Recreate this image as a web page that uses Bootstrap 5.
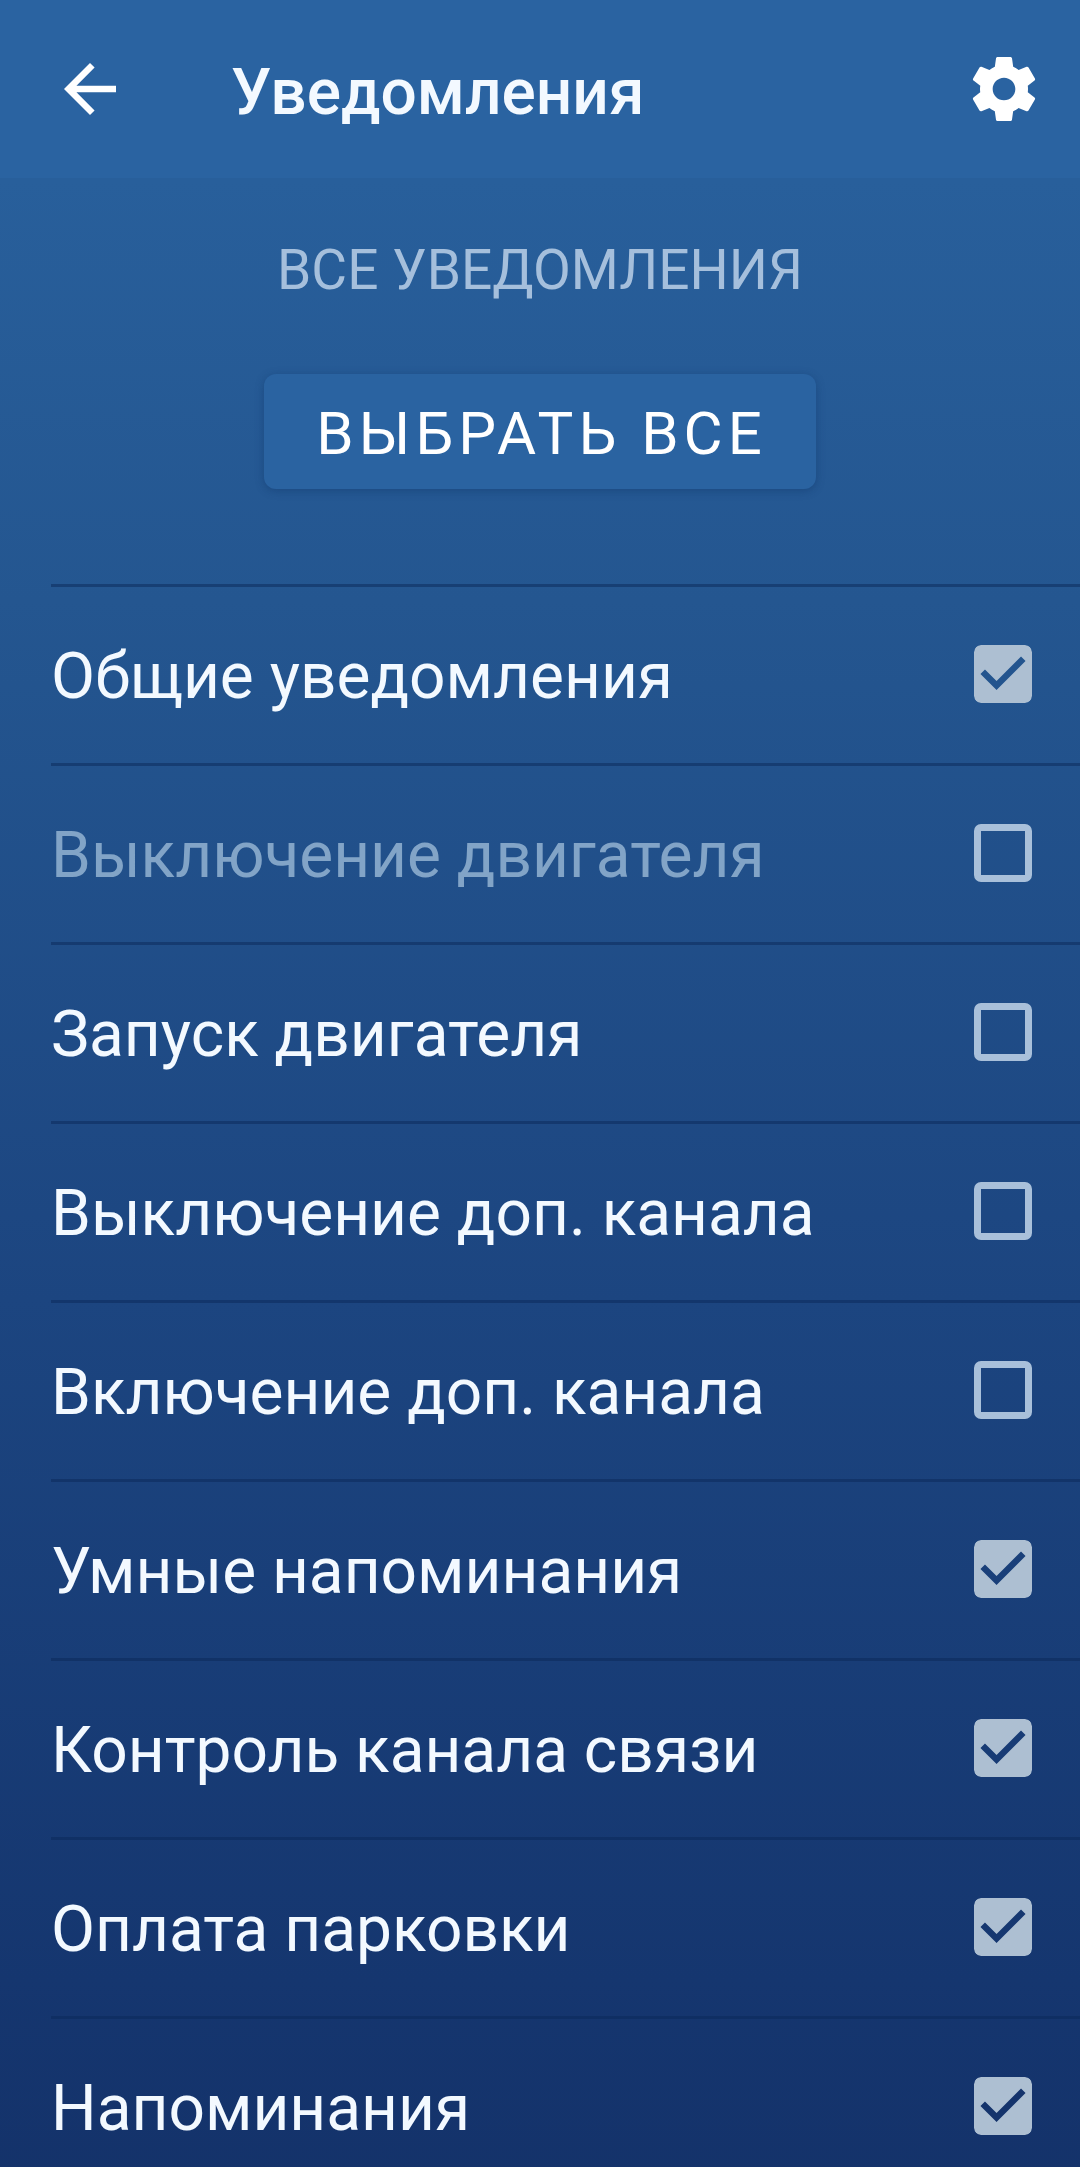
<!DOCTYPE html>
<html lang="ru">
<head>
<meta charset="utf-8">
<meta name="viewport" content="width=device-width, initial-scale=1">
<title>Уведомления</title>
<link href="https://cdn.jsdelivr.net/npm/bootstrap@5.3.0/dist/css/bootstrap.min.css" rel="stylesheet">
<style>
  body {
    font-family: Roboto, "Liberation Sans", sans-serif;
    color: #f3f9ff;
    background: #14326a;
  }
  .screen { background: linear-gradient(#2a62a0 0, #285f9b 180px, #245690 600px, #1c4580 1300px, #15366f 1980px, #14326a 100%); }
  .app-bar { height: 178px; background: #2a63a1; padding: 0 36px 0 51px; }
  .app-title { font-size: 64px; line-height: 76px; font-weight: 500; margin-left: 102px; padding-top: 8px; }
  .icon-btn { color: #fff; line-height: 0; padding: 0; border: 0; background: none; }
  .all-head { padding: 56px 0 95px; gap: 68px; }
  .all-title { font-size: 55px; line-height: 72px; font-weight: 400; color: #a5bfdc; }
  .btn-all, .btn-all:hover {
    font-size: 60px; line-height: 83px; letter-spacing: 5px; color: #fff;
    background: #2a63a1; border: 0; border-radius: 12px; padding: 18px 49px 14px 52px;
    box-shadow: 0 2px 8px rgba(12, 50, 100, .4);
  }
  .option-list { padding-left: 51px; }
  .option { height: 179px; border-top: 3px solid rgba(10, 40, 88, .5); padding: 0 48px 2px 0; }
  .option label { font-size: 64px; line-height: 80px; padding-top: 6px; }
  .option .is-off { color: #82a4c7; }
  .tick.form-check-input {
    width: 58px; height: 58px; margin: 0; border: 7px solid #a9c0da; border-radius: 7px;
    background: none; box-shadow: none;
  }
  .tick.form-check-input:checked {
    border: 0; background: #adbfd2;
    -webkit-mask: url("data:image/svg+xml,%3Csvg xmlns='http://www.w3.org/2000/svg' viewBox='3 3 18 18'%3E%3Cpath fill-rule='evenodd' d='M3 3h18v18H3zM10 17l-5-5 1.41-1.41L10 14.17l7.59-7.59L19 8z'/%3E%3C/svg%3E") center / 100% 100%;
    mask: url("data:image/svg+xml,%3Csvg xmlns='http://www.w3.org/2000/svg' viewBox='3 3 18 18'%3E%3Cpath fill-rule='evenodd' d='M3 3h18v18H3zM10 17l-5-5 1.41-1.41L10 14.17l7.59-7.59L19 8z'/%3E%3C/svg%3E") center / 100% 100%;
  }
</style>
</head>
<body>
<div class="screen min-vh-100">
  <header class="app-bar d-flex align-items-center">
    <button type="button" class="icon-btn" aria-label="Назад">
      <svg width="78" height="78" viewBox="0 0 24 24" fill="currentColor"><path d="M20 11H7.83l5.59-5.59L12 4l-8 8 8 8 1.41-1.41L7.83 13H20z"/></svg>
    </button>
    <h1 class="app-title mb-0">Уведомления</h1>
    <button type="button" class="icon-btn ms-auto" aria-label="Настройки">
      <svg width="80" height="80" viewBox="0 0 24 24" fill="currentColor"><path d="M19.14 12.94c.04-.3.06-.61.06-.94 0-.32-.02-.64-.07-.94l2.03-1.58c.18-.14.23-.41.12-.61l-1.92-3.32c-.12-.22-.37-.29-.59-.22l-2.39.96c-.5-.38-1.03-.7-1.62-.94l-.36-2.54c-.04-.24-.24-.41-.48-.41h-3.84c-.24 0-.43.17-.47.41l-.36 2.54c-.59.24-1.13.57-1.62.94l-2.39-.96c-.22-.08-.47 0-.59.22L2.74 8.87c-.12.21-.08.47.12.61l2.03 1.58c-.05.3-.09.63-.09.94s.02.64.07.94l-2.03 1.58c-.18.14-.23.41-.12.61l1.92 3.32c.12.22.37.29.59.22l2.39-.96c.5.38 1.03.7 1.62.94l.36 2.54c.05.24.24.41.48.41h3.84c.24 0 .44-.17.47-.41l.36-2.54c.59-.24 1.13-.56 1.62-.94l2.39.96c.22.08.47 0 .59-.22l1.92-3.32c.12-.22.07-.47-.12-.61l-2.01-1.58zM12 15.4c-1.88 0-3.4-1.52-3.4-3.4s1.52-3.4 3.4-3.4 3.4 1.52 3.4 3.4-1.52 3.4-3.4 3.4z"/></svg>
    </button>
  </header>
  <main>
    <section class="all-head d-flex flex-column align-items-center">
      <h2 class="all-title mb-0">ВСЕ УВЕДОМЛЕНИЯ</h2>
      <button type="button" class="btn btn-all">ВЫБРАТЬ ВСЕ</button>
    </section>
    <section class="option-list">
      <div class="option d-flex align-items-center"><label class="flex-grow-1" for="n1">Общие уведомления</label><input class="form-check-input tick" type="checkbox" id="n1" checked></div>
      <div class="option d-flex align-items-center"><label class="flex-grow-1 is-off" for="n2">Выключение двигателя</label><input class="form-check-input tick" type="checkbox" id="n2"></div>
      <div class="option d-flex align-items-center"><label class="flex-grow-1" for="n3">Запуск двигателя</label><input class="form-check-input tick" type="checkbox" id="n3"></div>
      <div class="option d-flex align-items-center"><label class="flex-grow-1" for="n4">Выключение доп. канала</label><input class="form-check-input tick" type="checkbox" id="n4"></div>
      <div class="option d-flex align-items-center"><label class="flex-grow-1" for="n5">Включение доп. канала</label><input class="form-check-input tick" type="checkbox" id="n5"></div>
      <div class="option d-flex align-items-center"><label class="flex-grow-1" for="n6">Умные напоминания</label><input class="form-check-input tick" type="checkbox" id="n6" checked></div>
      <div class="option d-flex align-items-center"><label class="flex-grow-1" for="n7">Контроль канала связи</label><input class="form-check-input tick" type="checkbox" id="n7" checked></div>
      <div class="option d-flex align-items-center"><label class="flex-grow-1" for="n8">Оплата парковки</label><input class="form-check-input tick" type="checkbox" id="n8" checked></div>
      <div class="option d-flex align-items-center"><label class="flex-grow-1" for="n9">Напоминания</label><input class="form-check-input tick" type="checkbox" id="n9" checked></div>
    </section>
  </main>
</div>
<script src="https://cdn.jsdelivr.net/npm/bootstrap@5.3.0/dist/js/bootstrap.bundle.min.js"></script>
</body>
</html>
